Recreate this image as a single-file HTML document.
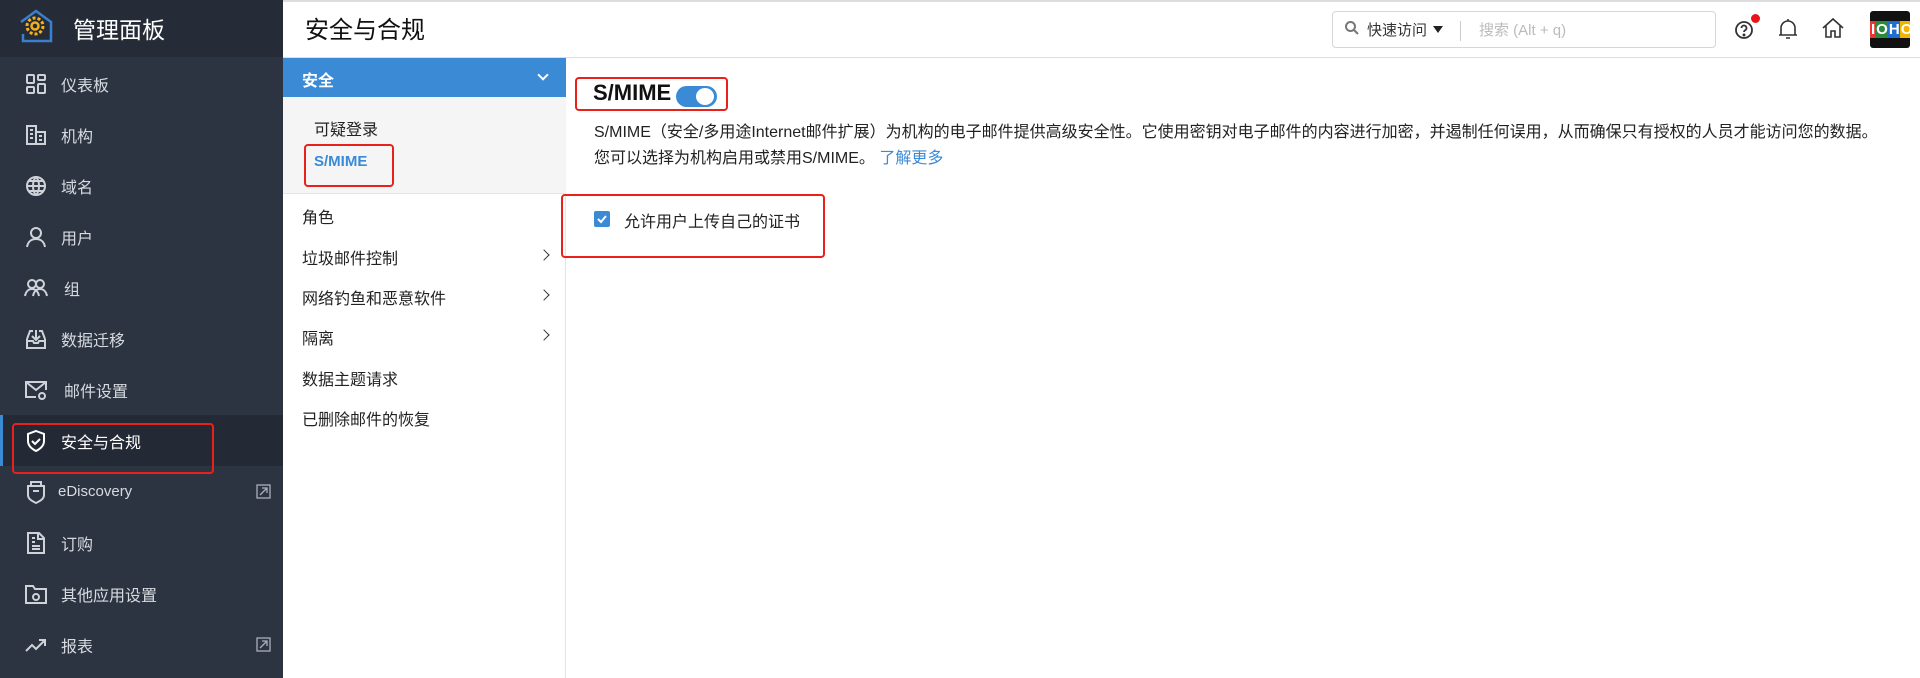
<!DOCTYPE html>
<html><head><meta charset="utf-8"><style>
*{margin:0;padding:0;box-sizing:border-box}
body{width:1920px;height:678px;overflow:hidden;background:#fff;font-family:"Liberation Sans","Noto Sans CJK SC",sans-serif;position:relative;color:#222}
.abs{position:absolute}
#side{left:0;top:0;width:283px;height:678px;background:#2c3442}
#side .top{position:absolute;left:0;top:0;width:283px;height:57px;background:#252c37}
.mi{position:absolute;left:0;width:283px;height:51px;color:#d7dbe0;font-size:16px;display:flex;align-items:center}
.mi svg{position:absolute;left:24px;width:24px;height:24px}
.mi span{position:absolute;left:61px}
.ext{position:absolute;right:12px;width:15px;height:15px}
.sub{position:absolute;left:302px;font-size:16px;color:#222}
.chev{position:absolute;left:540px;width:8px;height:8px;border-right:1.5px solid #333;border-bottom:1.5px solid #333;transform:rotate(-45deg)}
.rb{position:absolute;border:2.5px solid #e8211b;border-radius:4px}
</style></head><body>
<div id="side" class="abs">
<div class="top"></div>
<svg class="abs" style="left:18px;top:8px" width="36" height="36" viewBox="0 0 36 36"><path d="M3 14 L18 3 L33 14 V33 H5 V26" fill="none" stroke="#3a7fd0" stroke-width="2.5"/><circle cx="17" cy="18" r="8" fill="none" stroke="#f3b11b" stroke-width="3" stroke-dasharray="3 2"/><circle cx="17" cy="18" r="3.5" fill="none" stroke="#f3b11b" stroke-width="2.5"/></svg>
<div class="abs" style="left:73px;top:11px;font-size:23px;color:#fff">管理面板</div>
<div class="mi" style="top:58px"><svg viewBox="0 0 24 24" fill="none" stroke="#cfd3d8" stroke-width="2"><rect x="3" y="3" width="7" height="8" rx="1"/><rect x="14" y="3" width="7" height="5" rx="1"/><rect x="3" y="15" width="7" height="6" rx="1"/><rect x="14" y="12" width="7" height="9" rx="1"/></svg><span>仪表板</span></div>
<div class="mi" style="top:109px"><svg viewBox="0 0 24 24" fill="none" stroke="#cfd3d8" stroke-width="2"><path d="M3 21V3h9v18M12 9h9v12H2M6 7h3M6 11h3M6 15h3M15 13h3M15 17h3"/></svg><span>机构</span></div>
<div class="mi" style="top:160px"><svg viewBox="0 0 24 24" fill="none" stroke="#cfd3d8" stroke-width="2"><circle cx="12" cy="12" r="9"/><path d="M3 12h18M12 3c-4 4-4 14 0 18M12 3c4 4 4 14 0 18M5 7h14M5 17h14"/></svg><span>域名</span></div>
<div class="mi" style="top:211px"><svg viewBox="0 0 24 24" fill="none" stroke="#cfd3d8" stroke-width="2"><circle cx="12" cy="8" r="5"/><path d="M3 22c1-6 5-8 9-8s8 2 9 8"/></svg><span>用户</span></div>
<div class="mi" style="top:262px"><svg viewBox="0 0 24 24" fill="none" stroke="#cfd3d8" stroke-width="2"><circle cx="8" cy="8" r="4"/><circle cx="16" cy="8" r="4"/><path d="M1 20c1-5 4-7 7-7s6 2 7 7M9 20c1-5 4-7 7-7s6 2 7 7"/></svg><span style="left:64px">组</span></div>
<div class="mi" style="top:313px"><svg viewBox="0 0 24 24" fill="none" stroke="#cfd3d8" stroke-width="2"><path d="M3 12v9h18v-9M3 12l3-8h3M21 12l-3-8h-3M12 3v10M8 9l4 4 4-4M3 14h6l1 2h4l1-2h6"/></svg><span>数据迁移</span></div>
<div class="mi" style="top:364px"><svg viewBox="0 0 24 24" fill="none" stroke="#cfd3d8" stroke-width="2"><path d="M12 19H2V4h20v8M2 4l10 8 10-8"/><circle cx="18" cy="18" r="3"/></svg><span style="left:64px">邮件设置</span></div>
<div class="abs" style="left:0;top:415px;width:283px;height:51px;background:#232a35"></div>
<div class="abs" style="left:0;top:415px;width:3px;height:51px;background:#3a8ad6"></div>
<div class="mi" style="top:415px;color:#fff"><svg viewBox="0 0 24 24" fill="none" stroke="#fff" stroke-width="2"><path d="M12 2l8 3v7c0 5-4 8-8 10-4-2-8-5-8-10V5z"/><path d="M8 12l3 3 5-5"/></svg><span>安全与合规</span></div>
<div class="mi" style="top:466px;font-size:15px"><svg viewBox="0 0 24 24" fill="none" stroke="#cfd3d8" stroke-width="2"><path d="M7 2h10v4H7zM4 6h16v9c0 4-4 6-8 8-4-2-8-4-8-8z M9 11h6"/></svg><span style="left:58px">eDiscovery</span><svg class="ext" style="left:256px;width:15px;height:15px" viewBox="0 0 15 15" fill="none" stroke="#aab0b8" stroke-width="1.3"><rect x="1" y="1" width="13" height="13"/><path d="M4 11l7-7M6 4h5v5"/></svg></div>
<div class="mi" style="top:517px"><svg viewBox="0 0 24 24" fill="none" stroke="#cfd3d8" stroke-width="2"><path d="M4 2h11l5 5v15H4z M14 2v6h6M8 7h3M8 11h3M8 15h8M8 18h8"/></svg><span>订购</span></div>
<div class="mi" style="top:568px"><svg viewBox="0 0 24 24" fill="none" stroke="#cfd3d8" stroke-width="2"><path d="M2 4h7l2 3h11v14H2z"/><circle cx="12" cy="15" r="3"/></svg><span>其他应用设置</span></div>
<div class="mi" style="top:619px"><svg viewBox="0 0 24 24" fill="none" stroke="#cfd3d8" stroke-width="2"><path d="M2 18l6-6 4 4 9-9M15 7h6v6"/></svg><span>报表</span><svg class="ext" style="left:256px;width:15px;height:15px" viewBox="0 0 15 15" fill="none" stroke="#aab0b8" stroke-width="1.3"><rect x="1" y="1" width="13" height="13"/><path d="M4 11l7-7M6 4h5v5"/></svg></div>
</div>
<div class="rb" style="left:12px;top:423px;width:202px;height:51px"></div>

<!-- header -->
<div class="abs" style="left:283px;top:0;width:1637px;height:2px;background:#ddd"></div>
<div class="abs" style="left:305px;top:10px;font-size:24px;color:#111">安全与合规</div>
<div class="abs" style="left:283px;top:57px;width:1637px;height:1px;background:#ddd"></div>
<div class="abs" style="left:1332px;top:11px;width:384px;height:37px;border:1px solid #d6d6d6;border-radius:4px"></div>
<svg class="abs" style="left:1344px;top:20px" width="16" height="16" viewBox="0 0 16 16" fill="none" stroke="#777" stroke-width="2"><circle cx="6.5" cy="6.5" r="4.5"/><path d="M10 10l4 4"/></svg>
<div class="abs" style="left:1367px;top:19px;font-size:15px;color:#333">快速访问</div>
<div class="abs" style="left:1433px;top:26px;border-left:5px solid transparent;border-right:5px solid transparent;border-top:7px solid #222"></div>
<div class="abs" style="left:1460px;top:21px;width:1px;height:20px;background:#ccc"></div>
<div class="abs" style="left:1479px;top:19px;font-size:15px;color:#bbb">搜索 (Alt + q)</div>
<svg class="abs" style="left:1733px;top:17px" width="24" height="24" viewBox="0 0 24 24" fill="none" stroke="#333" stroke-width="1.8"><circle cx="11" cy="13" r="8"/><path d="M8.5 11a2.5 2.5 0 1 1 3.5 2.3c-.7.4-1 .8-1 1.7"/><circle cx="11" cy="18" r=".6" fill="#333"/></svg>
<div class="abs" style="left:1751px;top:14px;width:9px;height:9px;border-radius:50%;background:#e8141a"></div>
<svg class="abs" style="left:1777px;top:17px" width="22" height="24" viewBox="0 0 22 24" fill="none" stroke="#333" stroke-width="1.6"><path d="M4 18V11a7 7 0 0 1 14 0v7zM2 18h18M9 21h4M11 2v2"/></svg>
<svg class="abs" style="left:1821px;top:17px" width="24" height="22" viewBox="0 0 24 22" fill="none" stroke="#333" stroke-width="1.6"><path d="M2 11L12 2l10 9M5 9v11h5v-6h4v6h5V9"/></svg>
<div class="abs" style="left:1870px;top:11px;width:40px;height:37px;background:#111;border-radius:3px;overflow:hidden;font:bold 15px 'Liberation Sans';color:#fff;padding-top:10px;letter-spacing:-1px"><span style="background:#e33;padding:0 1px">I</span><span style="background:#2a8a3e;padding:0 1px">O</span><span style="background:#1f6fd1;padding:0 1px">H</span><span style="background:#f0b400;padding:0 1px">O</span></div>

<!-- submenu -->
<div class="abs" style="left:283px;top:58px;width:283px;height:620px;border-right:1px solid #e5e5e5"></div>
<div class="abs" style="left:283px;top:58px;width:283px;height:39px;background:#3a8ad6"></div>
<div class="abs" style="left:302px;top:67px;font-size:16px;color:#fff;font-weight:bold">安全</div>
<div class="abs" style="left:539px;top:71px;width:8px;height:8px;border-right:2px solid #fff;border-bottom:2px solid #fff;transform:rotate(45deg)"></div>
<div class="abs" style="left:283px;top:97px;width:283px;height:97px;background:#f5f5f5;border-bottom:1px solid #e5e5e5"></div>
<div class="sub" style="left:314px;top:116px">可疑登录</div>
<div class="sub" style="left:314px;top:153px;color:#3a8ad6;font-weight:bold;font-size:15px">S/MIME</div>
<div class="rb" style="left:304px;top:144px;width:90px;height:43px"></div>
<div class="sub" style="top:204px">角色</div>
<div class="sub" style="top:245px">垃圾邮件控制</div><div class="chev" style="top:251px"></div>
<div class="sub" style="top:285px">网络钓鱼和恶意软件</div><div class="chev" style="top:291px"></div>
<div class="sub" style="top:325px">隔离</div><div class="chev" style="top:331px"></div>
<div class="sub" style="top:366px">数据主题请求</div>
<div class="sub" style="top:406px">已删除邮件的恢复</div>

<!-- main -->
<div class="abs" style="left:593px;top:80px;font-size:22px;font-weight:bold;color:#111">S/MIME</div>
<div class="abs" style="left:676px;top:86px;width:41px;height:21px;border-radius:11px;background:#3a8ad6"></div>
<div class="abs" style="left:696px;top:88px;width:18px;height:17px;border-radius:50%;background:#fff"></div>
<div class="rb" style="left:575px;top:77px;width:153px;height:34px"></div>
<div class="abs" style="left:594px;top:120px;font-size:16px;color:#222;line-height:26px;white-space:nowrap">S/MIME（安全/多用途Internet邮件扩展）为机构的电子邮件提供高级安全性。它使用密钥对电子邮件的内容进行加密，并遏制任何误用，从而确保只有授权的人员才能访问您的数据。<br>您可以选择为机构启用或禁用S/MIME。 <span style="color:#3a8ad6">了解更多</span></div>
<div class="abs" style="left:594px;top:211px;width:16px;height:16px;border-radius:2px;background:#3a8ad6"></div>
<svg class="abs" style="left:594px;top:211px" width="16" height="16" viewBox="0 0 16 16" fill="none" stroke="#fff" stroke-width="2"><path d="M4 8l3 3 5-6"/></svg>
<div class="abs" style="left:624px;top:208px;font-size:16px;color:#222">允许用户上传自己的证书</div>
<div class="rb" style="left:561px;top:194px;width:264px;height:64px"></div>
</body></html>
